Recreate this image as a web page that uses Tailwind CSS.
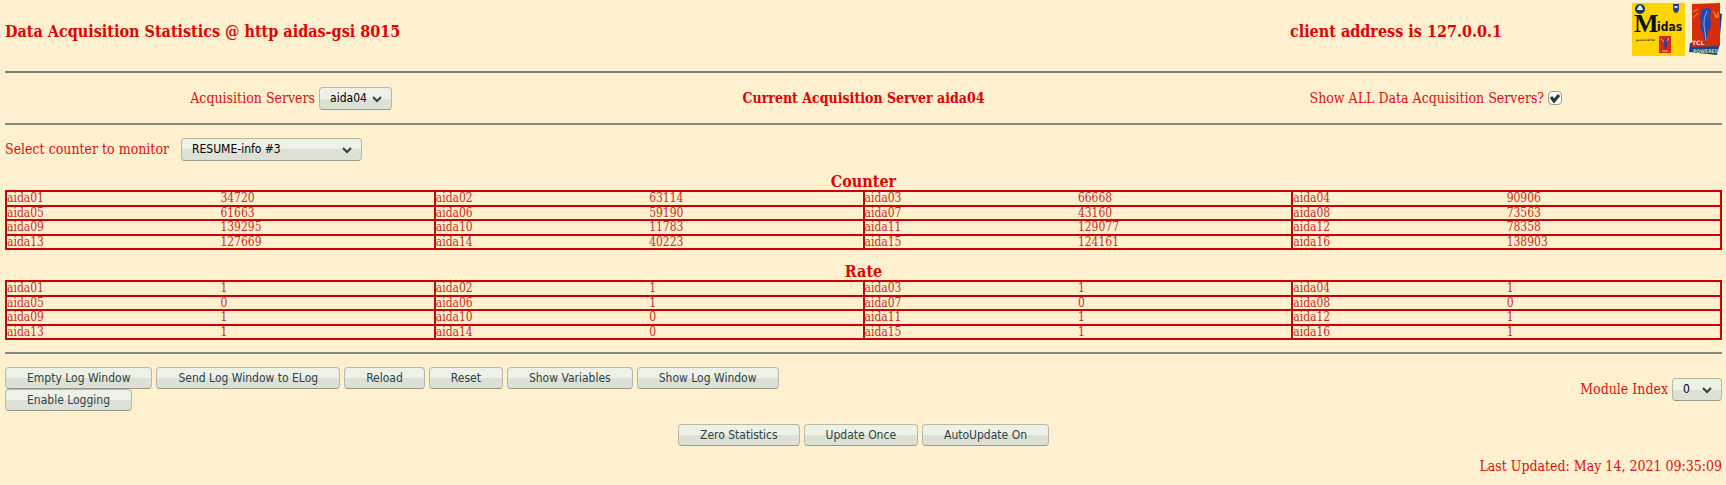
<!DOCTYPE html>
<html lang="en">
    <head>
        <meta charset="UTF-8" />
        <meta name="viewport" content="width=device-width, initial-scale=1.0" />
        <title>Data Acquisition Statistics</title>
        <script src="https://cdn.jsdelivr.net/npm/@tailwindcss/browser@4"></script>
    </head>

    <body class="bg-[#fff1cf] pl-[5px] pr-1 font-['DejaVu_Serif_Condensed','DejaVu_Serif',serif] text-sm text-[#dc1010]">
        <header class="flex items-center h-[71px]">
            <h1 class="flex-1 pb-2 text-base font-bold text-[#e00000]">Data Acquisition Statistics @ http aidas-gsi 8015</h1>
            <p class="mr-[130px] pb-2 text-base font-bold text-[#e00000]">client address is 127.0.0.1</p>
            <div class="flex gap-1 self-start pt-[3px]">
                <a href="#" aria-label="Midas">
                    <svg class="w-[53px] h-[53px]" viewBox="0 0 53 53">
                        <rect width="53" height="53" fill="#ffd400" />
                        <circle cx="8" cy="6" r="5" fill="#123a5c" />
                        <path d="M5 7h6L10 4 8 2 6 4z" fill="#dfe8ea" />
                        <path d="M41 1h6v5q0 3-3 4-3-1-3-4z" fill="#2a3c98" />
                        <path d="M42.500 3h3v2h-3z" fill="#d8d8e8" />
                        <text x="2" y="29" font-family="Liberation Serif" font-size="26" font-weight="bold" fill="#111">M</text>
                        <text x="25" y="28" font-family="DejaVu Sans Condensed, DejaVu Sans" font-size="12" font-weight="bold" fill="#111">idas</text>
                        <text x="4" y="38" font-family="DejaVu Serif" font-size="3" font-weight="bold" fill="#222">powered by</text>
                        <rect x="27" y="33" width="12" height="17" fill="#d42a10" />
                        <path d="M34 35q-3 2-2 6l1 6q3-4 2-11z" fill="#2c3f9c" />
                        <path d="M29 36l3 3M37 35l-2 3M30 48h6" stroke="#f0b090" fill="none" />
                    </svg>
                </a>
                <a href="#" aria-label="Tcl powered">
                    <svg class="w-[33px] h-[53px]" viewBox="0 0 33 53">
                        <path d="M1 40l3-1 26-29 3 1-3 33-2 8-28-3z" fill="#1d3c9c" />
                        <path d="M3 1l28-1v43l-28 1z" fill="#d62c08" />
                        <path d="M19 5l-6 1-2 7 1 6-1 6 3 5 1 6 2 5 1-9 3-6 1-7-1-5 1-7z" fill="#2446b0" />
                        <path d="M18 8q-4 8-3 14l2 16" stroke="#8fa8e0" fill="none" />
                        <path d="M4 9l5-3M4 15l5-5M24 8l4 6M26 11l1 4M29 9v6" stroke="#f3a020" fill="none" />
                        <text x="3" y="42" font-family="DejaVu Sans" font-size="6" font-weight="bold" fill="#f4e6d8">TCL</text>
                        <text x="4" y="50" font-family="DejaVu Sans Condensed, DejaVu Sans" font-size="5" font-weight="bold" fill="#b8dc70">POWERED</text>
                    </svg>
                </a>
            </div>
        </header>

        <hr class="border-t-2 border-[#7c8071]" />

        <section class="grid grid-cols-3 items-center justify-items-center h-[50px]">
            <div class="flex items-center gap-1">
                <label for="server">Acquisition Servers</label>
                <div class="relative">
                    <select id="server" class="block appearance-none w-[73px] h-[23px] pl-[10px] border border-[#b5b9a9] border-b-[#969a8c] rounded-sm bg-linear-to-b from-[#edf1e6] from-50% to-[#dce0d5] to-50% font-['DejaVu_Sans_Condensed','DejaVu_Sans',sans-serif] text-xs text-black">
                        <option>aida04</option>
                    </select>
                    <svg class="absolute right-[10px] top-2 w-[10px] h-2 pointer-events-none" viewBox="0 0 10 8"><path d="M1 2l4 4 4-4" fill="none" stroke="#2e4347" stroke-width="2" /></svg>
                </div>
            </div>
            <p class="font-bold text-[#e00000]">Current Acquisition Server aida04</p>
            <div class="flex items-center gap-1">
                <label for="all">Show ALL Data Acquisition Servers?</label>
                <span class="relative">
                    <input id="all" type="checkbox" checked class="block appearance-none w-[14px] h-[14px] border border-[#999f94] rounded-sm bg-[#fafbf8]" />
                    <svg class="absolute left-0 top-0 w-[14px] h-[14px] pointer-events-none" viewBox="0 0 14 14"><path d="M3 6l3 4 5-6" fill="none" stroke="#26383c" stroke-width="3" /></svg>
                </span>
            </div>
        </section>

        <hr class="border-t-2 border-[#87897a]" />

        <section class="flex items-center gap-3 h-12">
            <label for="counter">Select counter to monitor</label>
            <div class="relative">
                <select id="counter" class="block appearance-none w-[181px] h-[23px] pl-[10px] border border-[#b5b9a9] border-b-[#969a8c] rounded-sm bg-linear-to-b from-[#edf1e6] from-50% to-[#dce0d5] to-50% font-['DejaVu_Sans_Condensed','DejaVu_Sans',sans-serif] text-xs text-black">
                    <option>RESUME-info #3</option>
                </select>
                <svg class="absolute right-[10px] top-2 w-[10px] h-2 pointer-events-none" viewBox="0 0 10 8"><path d="M1 2l4 4 4-4" fill="none" stroke="#2e4347" stroke-width="2" /></svg>
            </div>
        </section>

        <table class="w-full h-[60px] table-fixed border-collapse border-2 border-[#cc0000] text-xs leading-3 text-[#cc2a20]">
            <caption class="h-[17px] text-base leading-[17px] font-bold text-[#e00000]">Counter</caption>
            <tbody id="counters"></tbody>
        </table>

        <table class="w-full h-[60px] mt-[13px] table-fixed border-collapse border-2 border-[#cc0000] text-xs leading-3 text-[#cc2a20]">
            <caption class="h-[17px] text-base leading-[17px] font-bold text-[#e00000]">Rate</caption>
            <tbody id="rates"></tbody>
        </table>

        <hr class="mt-3 border-t-2 border-[#87897a]" />

        <section class="flex items-center justify-between pt-[13px]">
            <div class="flex flex-wrap gap-x-1 w-1/2 font-['DejaVu_Sans_Condensed','DejaVu_Sans',sans-serif] text-xs text-[#2e4347]">
                <button class="h-[22px] px-[21px] border border-[#b5b9a9] border-b-[#969a8c] rounded-sm bg-linear-to-b from-[#edf1e6] from-50% to-[#dce0d5] to-50%">Empty Log Window</button>
                <button class="h-[22px] px-[21px] border border-[#b5b9a9] border-b-[#969a8c] rounded-sm bg-linear-to-b from-[#edf1e6] from-50% to-[#dce0d5] to-50%">Send Log Window to ELog</button>
                <button class="h-[22px] px-[21px] border border-[#b5b9a9] border-b-[#969a8c] rounded-sm bg-linear-to-b from-[#edf1e6] from-50% to-[#dce0d5] to-50%">Reload</button>
                <button class="h-[22px] px-[21px] border border-[#b5b9a9] border-b-[#969a8c] rounded-sm bg-linear-to-b from-[#edf1e6] from-50% to-[#dce0d5] to-50%">Reset</button>
                <button class="h-[22px] px-[21px] border border-[#b5b9a9] border-b-[#969a8c] rounded-sm bg-linear-to-b from-[#edf1e6] from-50% to-[#dce0d5] to-50%">Show Variables</button>
                <button class="h-[22px] px-[21px] border border-[#b5b9a9] border-b-[#969a8c] rounded-sm bg-linear-to-b from-[#edf1e6] from-50% to-[#dce0d5] to-50%">Show Log Window</button>
                <button class="h-[22px] px-[21px] border border-[#b5b9a9] border-b-[#969a8c] rounded-sm bg-linear-to-b from-[#edf1e6] from-50% to-[#dce0d5] to-50%">Enable Logging</button>
            </div>
            <div class="flex items-center gap-1">
                <label for="module">Module Index</label>
                <div class="relative">
                    <select id="module" class="block appearance-none w-[50px] h-[23px] pl-[10px] border border-[#b5b9a9] border-b-[#969a8c] rounded-sm bg-linear-to-b from-[#edf1e6] from-50% to-[#dce0d5] to-50% font-['DejaVu_Sans_Condensed','DejaVu_Sans',sans-serif] text-xs text-black">
                        <option>0</option>
                    </select>
                    <svg class="absolute right-[10px] top-2 w-[10px] h-2 pointer-events-none" viewBox="0 0 10 8"><path d="M1 2l4 4 4-4" fill="none" stroke="#2e4347" stroke-width="2" /></svg>
                </div>
            </div>
        </section>

        <section class="flex justify-center gap-1 mt-[13px] font-['DejaVu_Sans_Condensed','DejaVu_Sans',sans-serif] text-xs text-[#2e4347]">
            <button class="h-[22px] px-[21px] border border-[#b5b9a9] border-b-[#969a8c] rounded-sm bg-linear-to-b from-[#edf1e6] from-50% to-[#dce0d5] to-50%">Zero Statistics</button>
            <button class="h-[22px] px-[21px] border border-[#b5b9a9] border-b-[#969a8c] rounded-sm bg-linear-to-b from-[#edf1e6] from-50% to-[#dce0d5] to-50%">Update Once</button>
            <button class="h-[22px] px-[21px] border border-[#b5b9a9] border-b-[#969a8c] rounded-sm bg-linear-to-b from-[#edf1e6] from-50% to-[#dce0d5] to-50%">AutoUpdate On</button>
        </section>

        <p class="mt-[10px] text-right">Last Updated: May 14, 2021 09:35:09</p>

        <script>
            const counters = [
                34720, 63114, 66668, 90906, 61663, 59190, 43160, 73563,
                139295, 11783, 129077, 78358, 127669, 40223, 124161, 138903,
            ];
            const rates = [1, 1, 1, 1, 0, 1, 0, 0, 1, 0, 1, 1, 1, 0, 1, 1];

            // four servers per row, name and value side by side
            function fillTable(id, values) {
                const body = document.getElementById(id);
                for (let i = 0; i < values.length; i += 4) {
                    const row = body.insertRow();
                    row.className = "border-y-2 border-[#cc0000]";
                    for (let j = i; j < i + 4; j++) {
                        const name = document.createElement("th");
                        name.scope = "row";
                        name.className = "p-0 border-l-2 border-l-[#b01010] text-left font-normal";
                        name.textContent = "aida" + String(j + 1).padStart(2, "0");
                        row.append(name);
                        const value = row.insertCell();
                        value.className = "p-0";
                        value.textContent = values[j];
                    }
                }
            }

            fillTable("counters", counters);
            fillTable("rates", rates);
        </script>
    </body>
</html>
